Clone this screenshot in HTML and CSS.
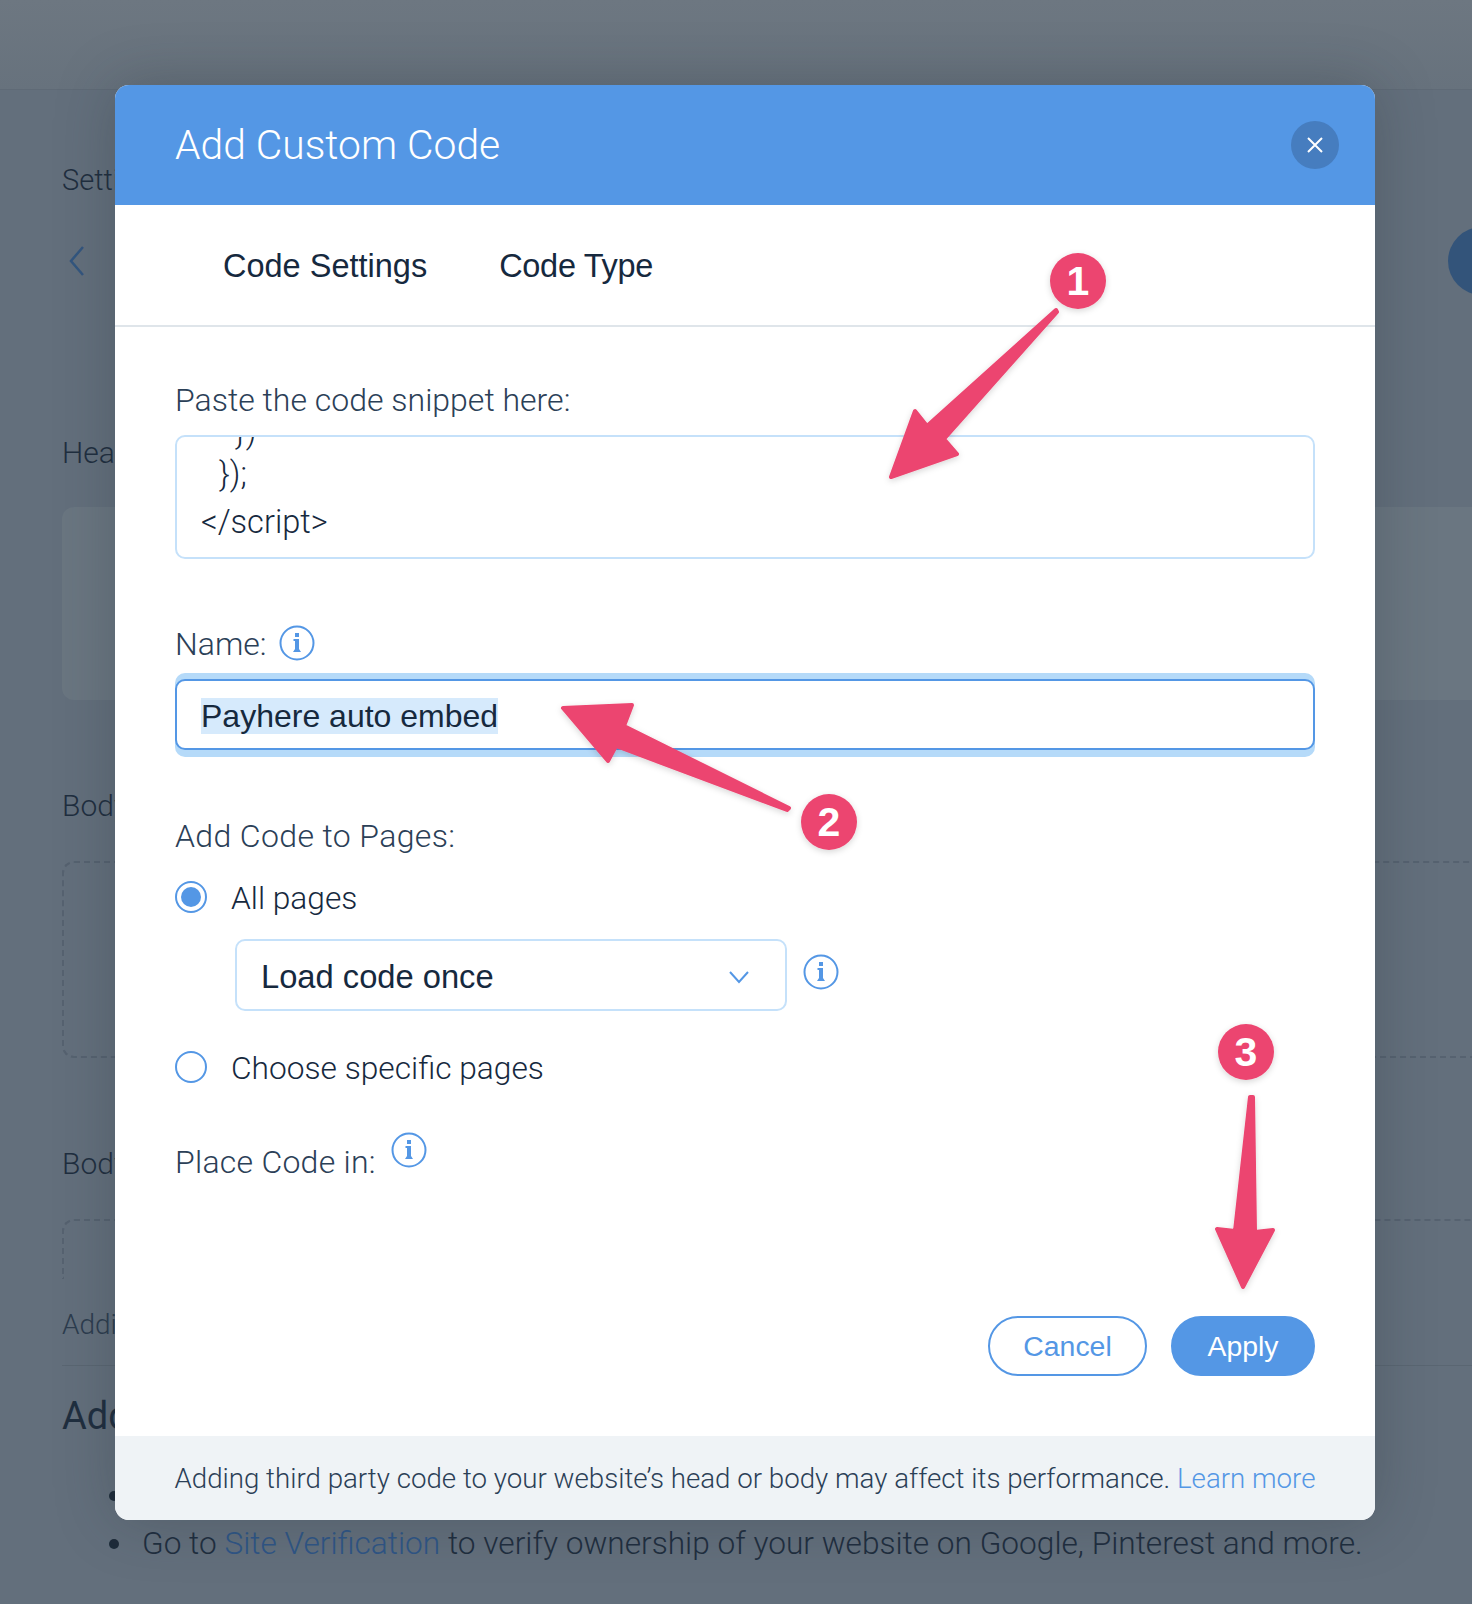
FILE: index.html
```html
<!DOCTYPE html>
<html lang="en">
<head>
    <meta charset="UTF-8">
    <title>Add Custom Code</title>
    <link rel="stylesheet" href="styles.css">
</head>
<body>
    <!-- page behind the dialog -->
    <div class="page">
        <div class="topbar"></div>
        <div class="content">
            <div class="crumb">Settings</div>
            <div class="back-row">
                <svg class="back" width="18" height="34" viewBox="0 0 18 34"><path d="M15 3 L3 17 L15 31" fill="none" stroke="#33567f" stroke-width="2.5"/></svg>
                <div class="round-btn"></div>
            </div>
            <div class="section head-title">Head</div>
            <div class="card"></div>
            <div class="section body-title">Body - start</div>
            <div class="dashed"></div>
            <div class="section body-title-2">Body - end</div>
            <div class="dashed open"></div>
            <div class="adding">Adding</div>
            <div class="rule"></div>
            <div class="add-title">Add</div>
            <ul class="tips">
                <li>&nbsp;</li>
                <li>Go to <a href="#">Site Verification</a> to verify ownership of your website on Google, Pinterest and more.</li>
            </ul>
        </div>
    </div>

    <!-- dialog -->
    <div class="modal">
        <div class="modal-header">
            <h1>Add Custom Code</h1>
            <div class="close">
                <svg width="18" height="18" viewBox="0 0 18 18"><path d="M2 2 L16 16 M16 2 L2 16" stroke="#fff" stroke-width="2"/></svg>
            </div>
        </div>
        <div class="tabs">
            <span class="tab">Code Settings</span>
            <span class="tab tab-type">Code Type</span>
        </div>
        <div class="modal-body">
            <div class="label">Paste the code snippet here:</div>
            <div class="snippet">
                <div class="code-line cut">})</div>
                <div class="code-line indent">});</div>
                <div class="code-line">&lt;/script&gt;</div>
            </div>

            <div class="label name-label">
                Name:
                <svg class="info lifted" width="36" height="36" viewBox="0 0 36 36"><use href="#info"/></svg>
            </div>
            <div class="name-glow">
                <div class="name-input"><span class="selected">Payhere auto embed</span></div>
            </div>

            <div class="label pages-label">Add Code to Pages:</div>
            <div class="radio-row">
                <span class="radio on"></span>
                <span class="radio-text">All pages</span>
            </div>
            <div class="select-row">
                <div class="select">
                    <span>Load code once</span>
                    <svg width="22" height="14" viewBox="0 0 22 14"><path d="M2 2 L11 12 L20 2" fill="none" stroke="#5497e5" stroke-width="2"/></svg>
                </div>
                <svg class="info" width="36" height="36" viewBox="0 0 36 36"><use href="#info"/></svg>
            </div>
            <div class="radio-row second">
                <span class="radio"></span>
                <span class="radio-text">Choose specific pages</span>
            </div>
            <div class="label place-label">
                Place Code in:
                <svg class="info raised" width="36" height="36" viewBox="0 0 36 36"><use href="#info"/></svg>
            </div>
            <div class="actions">
                <button class="btn cancel">Cancel</button>
                <button class="btn apply">Apply</button>
            </div>
        </div>
        <div class="modal-footer">Adding third party code to your website’s head or body may affect its performance. <a href="#">Learn more</a></div>
    </div>

    <!-- annotations drawn on top of the screenshot -->
    <svg class="arrows" width="1472" height="1604" viewBox="0 0 1472 1604">
        <defs>
            <g id="info">
                <circle cx="18" cy="18" r="16.5" fill="none" stroke="#5497e5" stroke-width="2"/>
                <rect x="16" y="8" width="4" height="4" fill="#5497e5"/>
                <path d="M14.5 14 H20 V24 L22 27 H14 L16 24 V16 H14.5 Z" fill="#5497e5"/>
            </g>
            <filter id="soft" x="-20%" y="-20%" width="140%" height="140%">
                <feDropShadow dx="0" dy="2" stdDeviation="3" flood-color="#000" flood-opacity="0.16"/>
            </filter>
        </defs>
        <g fill="#ec4570" stroke="#ec4570" stroke-width="4" stroke-linejoin="round" filter="url(#soft)">
            <polygon points="1056,310 927,426 915,411 891,477 957,454 944,439 1057,312"/>
            <polygon points="563,708 632,705 624,726 789,808 787,810 616,746 608,761"/>
            <polygon points="1250,1097 1253,1097 1255,1232 1273,1230 1243,1287 1217,1229 1235,1231"/>
        </g>
        <g filter="url(#soft)">
            <circle cx="1078" cy="281" r="28" fill="#ec4570"/>
            <circle cx="829" cy="822" r="28" fill="#ec4570"/>
            <circle cx="1246" cy="1052" r="28" fill="#ec4570"/>
        </g>
        <g class="badge-num">
            <text x="1078" y="295">1</text>
            <text x="829" y="836">2</text>
            <text x="1246" y="1066">3</text>
        </g>
    </svg>
</body>
</html>
```

FILE: styles.css
```css
* {
    box-sizing: border-box;
}

body {
    margin: 0;
    width: 1472px;
    height: 1604px;
    overflow: hidden;
    position: relative;
    font-family: "Liberation Sans", Arial, sans-serif;
    background-color: #636f7c;
}

a {
    text-decoration: none;
}

/* background page */
.page {
    height: 100%;
    color: #1f2e3f;
    font-weight: 400;
}

.topbar {
    height: 90px;
    background: linear-gradient(#6d7781, #67727d);
    border-bottom: 1px solid #5f6a76;
}

.content {
    padding-left: 62px;
    margin-right: -10px;
    font-family: Roboto, "Liberation Sans", sans-serif;
    font-weight: 300;
    font-size: 30px;
}

.crumb {
    height: 34px;
    line-height: 34px;
    margin-top: 73px;
    font-size: 29px;
}

.back-row {
    display: flex;
    justify-content: space-between;
    align-items: center;
    height: 68px;
    margin-top: 30px;
    padding-left: 6px;
}

.round-btn {
    width: 68px;
    height: 68px;
    margin-right: -34px;
    border-radius: 50%;
    background-color: #33547a;
}

.section {
    height: 36px;
    line-height: 36px;
}

.head-title {
    margin-top: 140px;
}

.card {
    height: 193px;
    margin-top: 36px;
    background-color: #6a7681;
    border-radius: 12px 0 0 12px;
}

.body-title {
    margin-top: 88px;
}

.dashed {
    height: 197px;
    margin-top: 37px;
    border: 2px dashed #566270;
    border-right: none;
    border-radius: 12px 0 0 12px;
}

.dashed.open {
    height: 60px;
    border-bottom: none;
    border-radius: 12px 0 0 0;
}

.body-title-2 {
    margin-top: 88px;
}

.adding {
    height: 34px;
    line-height: 34px;
    margin-top: 29px;
    font-size: 28px;
    color: #2c3c4e;
}

.rule {
    height: 1px;
    margin-top: 23px;
    background-color: #5a6672;
}

.add-title {
    height: 46px;
    line-height: 46px;
    margin-top: 27px;
    font-size: 38px;
    font-weight: 400;
}

.tips {
    list-style: none;
    margin: 33px 0 0;
    padding: 0 0 0 80px;
    font-size: 31.65px;
}

.tips li {
    position: relative;
    height: 48px;
    line-height: 48px;
    white-space: nowrap;
}

.tips li::before {
    content: "";
    position: absolute;
    left: -33px;
    top: 19px;
    width: 10px;
    height: 10px;
    border-radius: 50%;
    background-color: #1d2b3a;
}

.tips a {
    color: #2f5686;
}

/* dialog */
.modal {
    position: absolute;
    left: 115px;
    top: 85px;
    width: 1260px;
    height: 1435px;
    display: flex;
    flex-direction: column;
    background-color: white;
    border-radius: 14px;
    overflow: hidden;
    box-shadow: 0 0 60px rgba(35, 45, 55, 0.28);
    color: #2b4057;
}

.modal-header {
    display: flex;
    justify-content: space-between;
    align-items: center;
    height: 120px;
    padding: 0 36px 0 60px;
    background-color: #5497e5;
    flex-shrink: 0;
}

.modal-header h1 {
    margin: 0;
    font-family: Roboto, "Liberation Sans", sans-serif;
    font-weight: 300;
    font-size: 40.8px;
    color: white;
}

.close {
    display: flex;
    justify-content: center;
    align-items: center;
    width: 48px;
    height: 48px;
    border-radius: 50%;
    background-color: #467dbf;
}

.tabs {
    display: flex;
    align-items: center;
    gap: 72px;
    height: 122px;
    padding: 2px 0 0 108px;
    border-bottom: 2px solid #dfe5ea;
    flex-shrink: 0;
}

.tab {
    font-size: 32.5px;
    color: #16293e;
}

.tab-type {
    letter-spacing: -0.3px;
}

.modal-body {
    flex: 1;
    padding: 55px 60px 0;
    font-family: Roboto, "Liberation Sans", sans-serif;
    font-weight: 300;
}

.label {
    height: 36px;
    line-height: 36px;
    font-size: 32px;
    color: #2b4057;
}

.snippet {
    height: 124px;
    margin-top: 17px;
    padding: 0 24px;
    border: 2px solid #c5e1fa;
    border-radius: 10px;
    overflow: hidden;
    font-size: 32.6px;
    color: #16293e;
}

.code-line {
    height: 48px;
    line-height: 48px;
}

/* last bit of the line scrolled out of the box */
.code-line.cut {
    height: 18px;
    margin-top: -5px;
    line-height: 0;
    padding-left: 34px;
}

.code-line.indent {
    padding-left: 18px;
}

.name-label {
    display: flex;
    align-items: center;
    gap: 12px;
    margin-top: 67px;
}

.info.lifted {
    margin-top: -2px;
}

.name-glow {
    height: 84px;
    margin-top: 11px;
    padding: 6px 0 7px;
    background-color: #b5daf9;
    border-radius: 10px;
}

.name-input {
    display: flex;
    align-items: center;
    height: 71px;
    padding: 2px 24px 0;
    background-color: white;
    border: 2px solid #5497e5;
    border-radius: 10px;
    font-family: "Liberation Sans", Arial, sans-serif;
    font-weight: 400;
    font-size: 32px;
    color: #16293e;
}

.selected {
    height: 36px;
    line-height: 36px;
    background-color: #d6eafc;
}

.pages-label {
    margin-top: 61px;
    letter-spacing: 0.36px;
}

.radio-row {
    display: flex;
    align-items: center;
    gap: 24px;
    height: 40px;
    margin-top: 23px;
}

.radio-row.second {
    margin-top: 36px;
}

.radio {
    position: relative;
    width: 32px;
    height: 32px;
    border: 2px solid #5497e5;
    border-radius: 50%;
    background-color: white;
}

.radio.on::after {
    content: "";
    position: absolute;
    left: 4px;
    top: 4px;
    width: 20px;
    height: 20px;
    border-radius: 50%;
    background-color: #5497e5;
}

.radio-text {
    padding-top: 2px;
    font-size: 31.7px;
    color: #16293e;
}

.select-row {
    display: flex;
    align-items: center;
    gap: 16px;
    margin-top: 22px;
    padding-left: 60px;
}

.select {
    display: flex;
    justify-content: space-between;
    align-items: center;
    width: 552px;
    height: 72px;
    padding: 3px 35px 0 24px;
    border: 2px solid #c5e1fa;
    border-radius: 10px;
    font-family: "Liberation Sans", Arial, sans-serif;
    font-weight: 400;
    font-size: 32.7px;
    color: #16293e;
}

.select-row .info {
    margin-top: -6px;
}

.place-label {
    display: flex;
    align-items: center;
    gap: 15px;
    margin-top: 57px;
    letter-spacing: 0.25px;
}

.info.raised {
    margin-top: -24px;
}

.actions {
    display: flex;
    justify-content: flex-end;
    gap: 24px;
    margin-top: 136px;
}

.btn {
    height: 60px;
    padding: 0;
    border-radius: 30px;
    border: 2px solid #5497e5;
    font-family: "Liberation Sans", Arial, sans-serif;
    font-size: 28.4px;
    cursor: pointer;
}

.cancel {
    width: 159px;
    background-color: white;
    color: #5497e5;
}

.apply {
    width: 144px;
    background-color: #5497e5;
    color: white;
}

.modal-footer {
    height: 84px;
    line-height: 86px;
    flex-shrink: 0;
    text-align: center;
    background-color: #eff3f6;
    font-family: Roboto, "Liberation Sans", sans-serif;
    font-weight: 300;
    font-size: 27.7px;
    color: #2b4057;
    white-space: nowrap;
}

.modal-footer a {
    color: #5497e5;
}

/* annotation layer */
.arrows {
    position: absolute;
    left: 0;
    top: 0;
}

.badge-num text {
    font-family: "Liberation Sans", sans-serif;
    font-weight: 700;
    font-size: 41px;
    fill: white;
    text-anchor: middle;
}
```
